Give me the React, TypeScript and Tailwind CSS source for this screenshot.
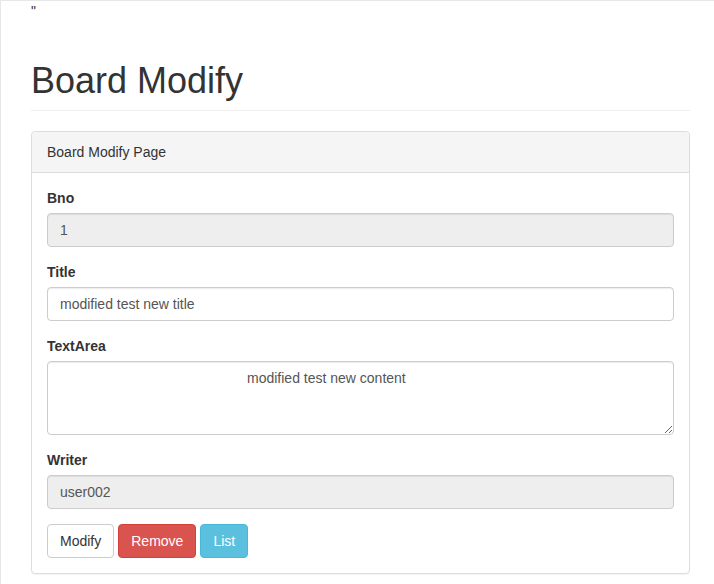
export default function App() {
  const inputBase =
    'block w-full h-[34px] px-3 py-1.5 text-sm leading-5 text-[#555] border border-[#ccc] rounded shadow-[inset_0_1px_1px_rgba(0,0,0,0.075)] outline-none';

  return (
    <div className="min-h-[584px] bg-white border-t border-l border-[#e7e7e7] font-['Liberation_Sans',Arial,sans-serif] text-sm leading-5 text-[#333]">
      <div className="ml-[30px] w-[659px]">
        <div>"</div>

        {/* Page header */}
        <h1 className="mt-10 mb-5 pb-[9px] border-b border-[#eee] text-[36px] leading-[1.1] font-normal">
          Board Modify
        </h1>

        {/* Panel */}
        <div className="border border-[#ddd] rounded shadow-[0_1px_1px_rgba(0,0,0,0.05)]">
          <div className="px-[15px] py-2.5 bg-[#f5f5f5] border-b border-[#ddd] rounded-t">
            Board Modify Page
          </div>
          <div className="p-[15px]">
            <div className="mb-[15px]">
              <label className="block mb-[5px] font-bold">Bno</label>
              <input className={`${inputBase} bg-[#eee]`} value="1" readOnly />
            </div>
            <div className="mb-[15px]">
              <label className="block mb-[5px] font-bold">Title</label>
              <input className={`${inputBase} bg-white`} defaultValue="modified test new title" />
            </div>
            <div className="mb-[15px]">
              <label className="block mb-[5px] font-bold">TextArea</label>
              <textarea
                rows={3}
                className="block w-full h-[74px] px-3 py-1.5 text-sm leading-5 text-[#555] bg-white border border-[#ccc] rounded shadow-[inset_0_1px_1px_rgba(0,0,0,0.075)] outline-none resize-y indent-[187px]"
                defaultValue="modified test new content"
              />
            </div>
            <div className="mb-[15px]">
              <label className="block mb-[5px] font-bold">Writer</label>
              <input className={`${inputBase} bg-[#eee]`} value="user002" readOnly />
            </div>
            <div className="flex gap-1">
              <button className="h-[34px] px-3 text-sm leading-5 text-[#333] bg-white border border-[#ccc] rounded">
                Modify
              </button>
              <button className="h-[34px] px-3 text-sm leading-5 text-white bg-[#d9534f] border border-[#d43f3a] rounded">
                Remove
              </button>
              <button className="h-[34px] px-3 text-sm leading-5 text-white bg-[#5bc0de] border border-[#46b8da] rounded">
                List
              </button>
            </div>
          </div>
        </div>
      </div>
    </div>
  );
}
